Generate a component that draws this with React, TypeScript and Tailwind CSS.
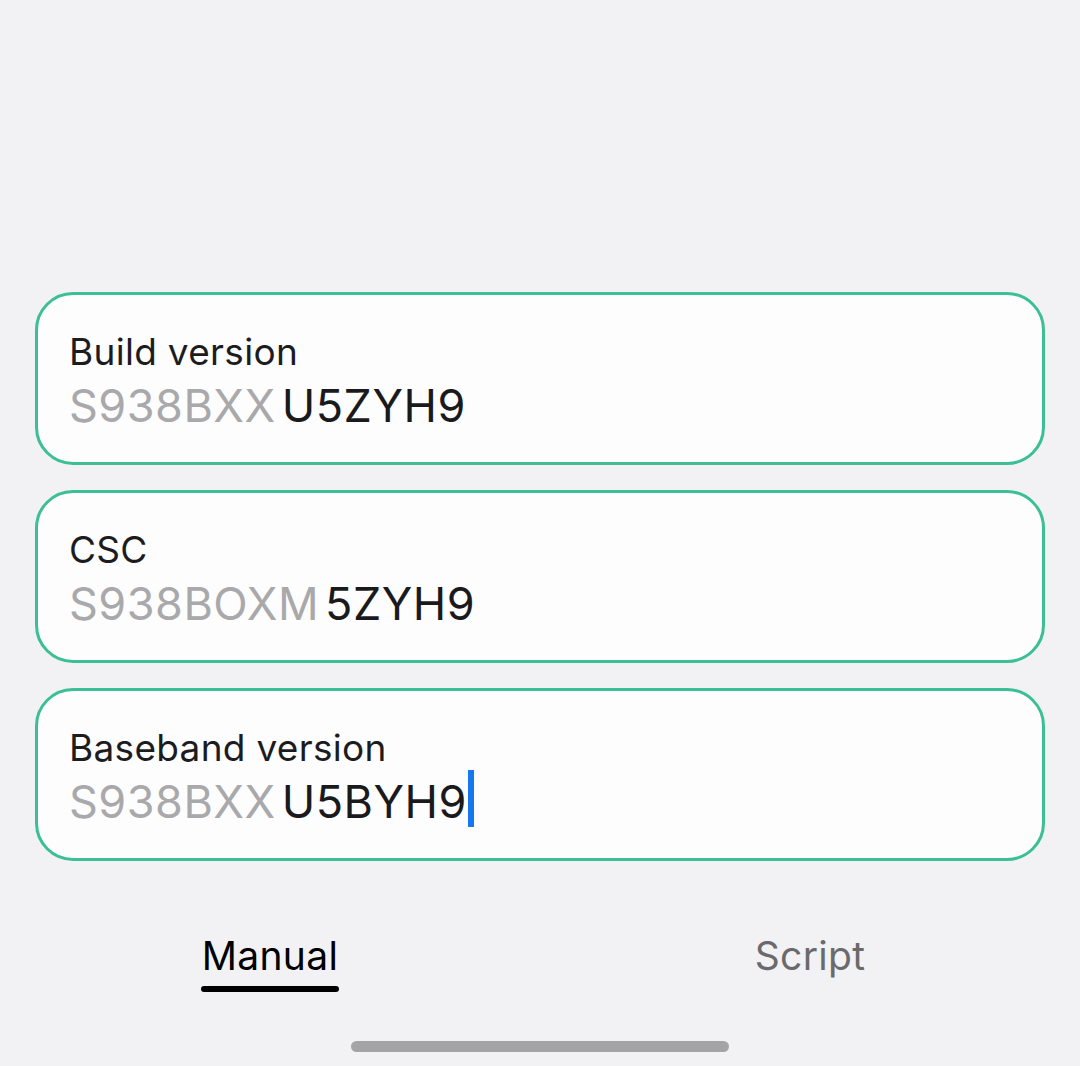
const fields = [
  { label: "Build version", prefix: "S938BXX", value: "U5ZYH9", focused: false },
  { label: "CSC", prefix: "S938BOXM", value: "5ZYH9", focused: false },
  { label: "Baseband version", prefix: "S938BXX", value: "U5BYH9", focused: true },
];

function VersionField({
  label,
  prefix,
  value,
  focused,
}: {
  label: string;
  prefix: string;
  value: string;
  focused: boolean;
}) {
  return (
    <div className="h-[173px] rounded-[38px] border-[3px] border-[#3cbf95] bg-[#fdfdfe] px-[31px] pt-[35px]">
      <div className="text-[37px] leading-[44px] tracking-[0.3px] text-[#1c1c1e]">{label}</div>
      <div className="mt-[4px] flex items-start text-[45px] leading-[56px] tracking-[0.5px]">
        <span className="text-[#a9a9ab]">{prefix}</span>
        <span className="ml-[6px] text-[#1a1a1c]">{value}</span>
        {focused && <span className="-mt-[4px] ml-[1px] h-[57px] w-[6px] bg-[#1678ee]" />}
      </div>
    </div>
  );
}

export default function App() {
  return (
    <div
      className="flex h-[1066px] w-[1080px] flex-col bg-[#f2f2f4]"
      style={{ fontFamily: "Inter, 'Noto Sans', sans-serif" }}
    >
      <div className="flex flex-col gap-[25px] px-[35px] pt-[292px]">
        {fields.map((f) => (
          <VersionField key={f.label} {...f} />
        ))}
      </div>

      <div className="mt-[72px] flex">
        <div className="flex w-1/2 justify-center">
          <div className="flex flex-col items-center">
            <span className="text-[39px] leading-[46px] tracking-[0.3px] text-black">Manual</span>
            <span className="mt-[7px] h-[6px] w-[138px] rounded-full bg-black" />
          </div>
        </div>
        <div className="flex w-1/2 justify-center">
          <span className="text-[39px] leading-[46px] tracking-[0.3px] text-[#6a6a6c]">Script</span>
        </div>
      </div>

      <div className="mt-[49px] flex justify-center">
        <span className="h-[11px] w-[378px] rounded-full bg-[#a4a4a6]" />
      </div>
    </div>
  );
}
